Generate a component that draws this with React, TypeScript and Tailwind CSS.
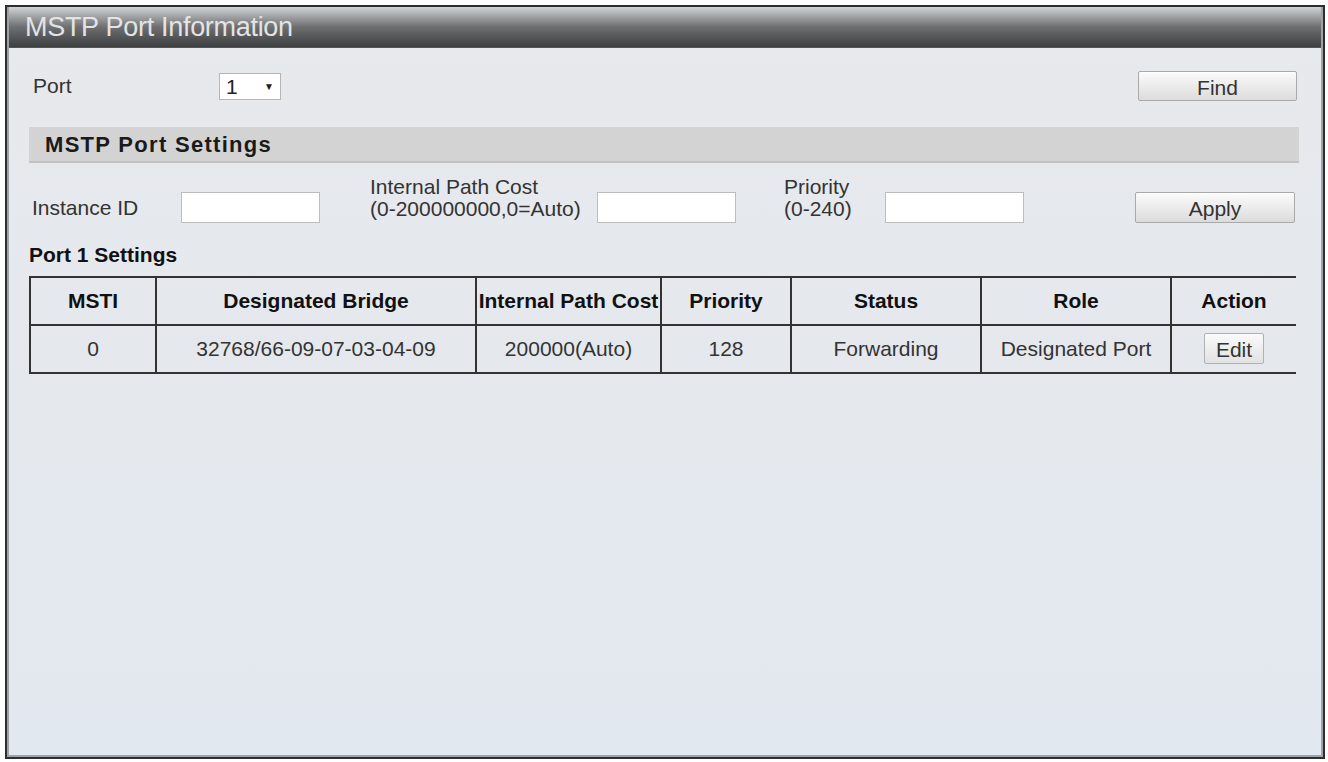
import { useState } from "react";

const font = { fontFamily: '"Liberation Sans", Arial, sans-serif' };

const columns = [
  { label: "MSTI", width: "w-[126px]" },
  { label: "Designated Bridge", width: "w-[320px]" },
  { label: "Internal Path Cost", width: "w-[185px]" },
  { label: "Priority", width: "w-[130px]" },
  { label: "Status", width: "w-[190px]" },
  { label: "Role", width: "w-[190px]" },
  { label: "Action", width: "w-[125px]" },
];

const rows = [
  {
    msti: "0",
    bridge: "32768/66-09-07-03-04-09",
    cost: "200000(Auto)",
    priority: "128",
    status: "Forwarding",
    role: "Designated Port",
  },
];

function GrayButton({ label, className }: { label: string; className: string }) {
  return (
    <button
      className={`shrink-0 border border-[#a9a9a9] rounded-[2px] bg-gradient-to-b from-[#fbfbfb] to-[#dcdcdc] text-[21px] text-[#333] shadow-[inset_0_1px_0_#fff] ${className}`}
    >
      {label}
    </button>
  );
}

export default function App() {
  const [port] = useState("1");
  const [instanceId, setInstanceId] = useState("");
  const [pathCost, setPathCost] = useState("");
  const [priority, setPriority] = useState("");

  return (
    <div className="w-[1328px] h-[762px] bg-white pt-[5px] pl-[5px]" style={font}>
      {/* Outer frame */}
      <div className="w-[1320px] h-[754px] border-2 border-[#2e2e2e] flex flex-col">
        <div className="flex-1 border-2 border-[#9ea3a8] border-t-0 flex flex-col bg-gradient-to-b from-[#e7e9ec] to-[#e2e8ef]">
          {/* Title bar */}
          <div className="h-[41px] bg-gradient-to-b from-[#d2d4d6] via-[#6e6f71] to-[#3e3f41] flex items-center pl-[16px] border-b border-[#555]">
            <span className="text-[27px] text-[#e4e4e4] leading-none tracking-[-0.3px]">
              MSTP Port Information
            </span>
          </div>

          <div className="flex flex-col pl-[20px] pr-[22px]">
            {/* Port row */}
            <div className="mt-[23px] h-[30px] flex items-center">
              <span className="w-[190px] pl-[4px] text-[21px] text-[#333]">Port</span>
              <div className="w-[62px] h-[27px] bg-white border border-[#b5b5b5] flex items-center justify-between px-[6px]">
                <span className="text-[21px] text-[#222] leading-none">{port}</span>
                <span className="text-[10px] text-[#222]">▼</span>
              </div>
              <div className="flex-1" />
              <GrayButton label="Find" className="w-[159px] h-[30px] mr-[2px]" />
            </div>

            {/* Section header */}
            <div className="mt-[26px] h-[36px] bg-[#d3d3d3] border-b-2 border-[#c2c2c2] flex items-center pl-[16px]">
              <span className="text-[22px] font-bold text-[#1a1a1a] tracking-[1.3px]">
                MSTP Port Settings
              </span>
            </div>

            {/* Settings row */}
            <div className="mt-[29px] h-[31px] flex items-center text-[21px] text-[#333] whitespace-nowrap">
              <span className="w-[152px] shrink-0 pl-[3px]">Instance ID</span>
              <input
                value={instanceId}
                onChange={(e) => setInstanceId(e.target.value)}
                className="w-[139px] shrink-0 h-[31px] bg-white border border-[#bcbcbc] outline-none px-1"
              />
              <div className="w-[277px] shrink-0 pl-[50px] leading-[22px] -mt-[20px]">
                <div>Internal Path Cost</div>
                <div>(0-200000000,0=Auto)</div>
              </div>
              <input
                value={pathCost}
                onChange={(e) => setPathCost(e.target.value)}
                className="w-[139px] shrink-0 h-[31px] bg-white border border-[#bcbcbc] outline-none px-1"
              />
              <div className="w-[149px] shrink-0 pl-[48px] leading-[22px] -mt-[20px]">
                <div>Priority</div>
                <div>(0-240)</div>
              </div>
              <input
                value={priority}
                onChange={(e) => setPriority(e.target.value)}
                className="w-[139px] shrink-0 h-[31px] bg-white border border-[#bcbcbc] outline-none px-1"
              />
              <div className="flex-1" />
              <GrayButton label="Apply" className="w-[160px] h-[31px] mr-[4px]" />
            </div>

            {/* Port 1 settings */}
            <div className="mt-[20px] h-[22px] flex items-center">
              <span className="text-[21px] font-bold text-[#111] leading-none">Port 1 Settings</span>
            </div>

            <table className="mt-[11px] w-[1266px] border-collapse table-fixed">
              <thead>
                <tr className="h-[48px] border-t-2 border-b-2 border-[#333]">
                  {columns.map((c) => (
                    <th
                      key={c.label}
                      className={`${c.width} border-l-2 border-[#333] text-[21px] font-bold text-[#111] text-center`}
                    >
                      {c.label}
                    </th>
                  ))}
                </tr>
              </thead>
              <tbody>
                {rows.map((r) => (
                  <tr key={r.msti} className="h-[48px] border-b-2 border-[#333] text-[21px] text-[#333] text-center">
                    <td className="border-l-2 border-[#333]">{r.msti}</td>
                    <td className="border-l-2 border-[#333]">{r.bridge}</td>
                    <td className="border-l-2 border-[#333]">{r.cost}</td>
                    <td className="border-l-2 border-[#333]">{r.priority}</td>
                    <td className="border-l-2 border-[#333]">{r.status}</td>
                    <td className="border-l-2 border-[#333]">{r.role}</td>
                    <td className="border-l-2 border-[#333]">
                      <button className="w-[60px] h-[31px] border border-[#b0b0b0] rounded-[2px] bg-gradient-to-b from-[#fafafa] to-[#e2e2e2] text-[21px] text-[#333]">
                        Edit
                      </button>
                    </td>
                  </tr>
                ))}
              </tbody>
            </table>
          </div>
        </div>
      </div>
    </div>
  );
}
